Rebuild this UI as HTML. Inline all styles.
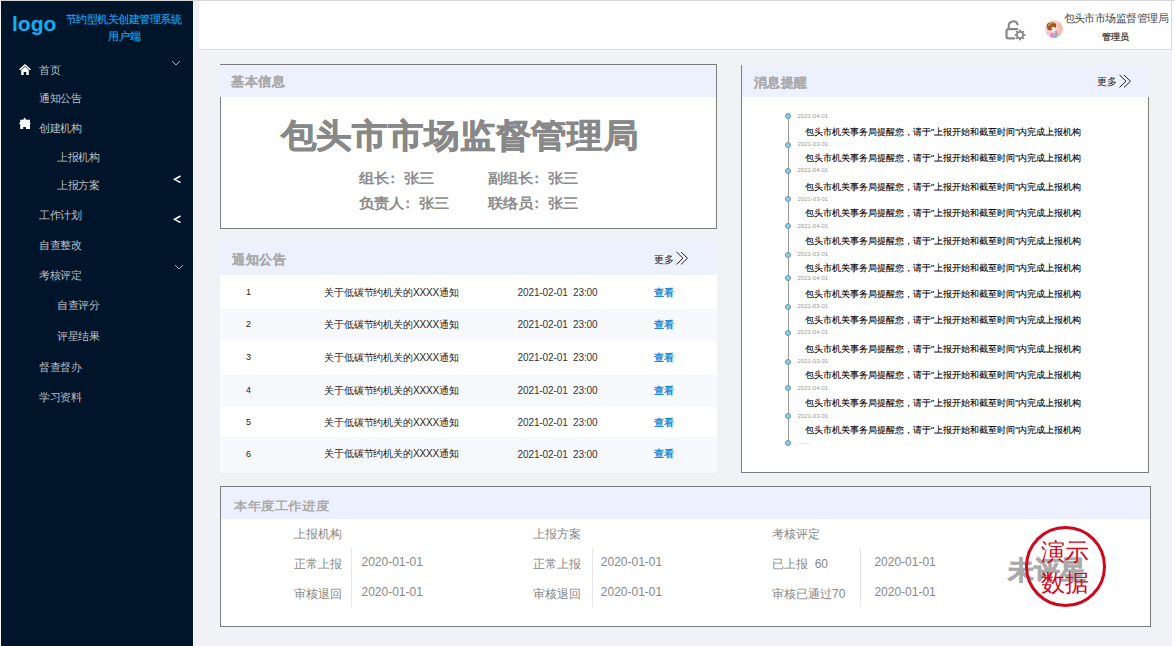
<!DOCTYPE html>
<html><head><meta charset="utf-8"><style>
html,body{margin:0;padding:0;}
body{width:1175px;height:646px;position:relative;overflow:hidden;background:#f0f2f5;font-family:'Liberation Sans',sans-serif;}
.t{position:absolute;white-space:nowrap;}
</style></head><body>
<div style="position:absolute;left:0px;top:0px;width:1175px;height:1px;background:#d8d8d8"></div>
<div style="position:absolute;left:0px;top:1px;width:1px;height:645px;background:#f4f4f4"></div>
<div style="position:absolute;left:1px;top:1px;width:192px;height:645px;background:#001529"></div>
<div style="position:absolute;left:193px;top:1px;width:1px;height:645px;background:#fbfbfc"></div>
<div style="position:absolute;left:199px;top:1px;width:972px;height:48px;background:#fff"></div>
<div style="position:absolute;left:199px;top:49px;width:973px;height:1px;background:#d9d9d9"></div>
<div style="position:absolute;left:1171px;top:1px;width:1px;height:49px;background:#d9d9d9"></div>
<div style="position:absolute;left:1172px;top:1px;width:3px;height:645px;background:#fff"></div>
<div class="t" style="left:12px;top:13px;font-size:21px;line-height:21px;color:#10aef5;font-weight:700;">logo</div>
<div class="t" style="left:66px;top:14px;font-size:11px;line-height:11px;color:#12a6ee;font-weight:400;letter-spacing:-0.55px;-webkit-text-stroke:0.15px #12a6ee">节约型机关创建管理系统</div>
<div class="t" style="left:107.5px;top:30.5px;font-size:11px;line-height:11px;color:#12a6ee;font-weight:400;-webkit-text-stroke:0.15px #12a6ee">用户端</div>
<div class="t" style="left:39px;top:64.8px;font-size:11px;line-height:11px;color:#b9bfc6;font-weight:400;letter-spacing:-0.3px">首页</div>
<div class="t" style="left:39px;top:93.3px;font-size:11px;line-height:11px;color:#b9bfc6;font-weight:400;letter-spacing:-0.3px">通知公告</div>
<div class="t" style="left:39px;top:122.9px;font-size:11px;line-height:11px;color:#b9bfc6;font-weight:400;letter-spacing:-0.3px">创建机构</div>
<div class="t" style="left:57px;top:152.0px;font-size:11px;line-height:11px;color:#b9bfc6;font-weight:400;letter-spacing:-0.3px">上报机构</div>
<div class="t" style="left:57px;top:179.9px;font-size:11px;line-height:11px;color:#b9bfc6;font-weight:400;letter-spacing:-0.3px">上报方案</div>
<div class="t" style="left:39px;top:209.8px;font-size:11px;line-height:11px;color:#b9bfc6;font-weight:400;letter-spacing:-0.3px">工作计划</div>
<div class="t" style="left:39px;top:239.9px;font-size:11px;line-height:11px;color:#b9bfc6;font-weight:400;letter-spacing:-0.3px">自查整改</div>
<div class="t" style="left:39px;top:270.2px;font-size:11px;line-height:11px;color:#b9bfc6;font-weight:400;letter-spacing:-0.3px">考核评定</div>
<div class="t" style="left:57px;top:299.8px;font-size:11px;line-height:11px;color:#b9bfc6;font-weight:400;letter-spacing:-0.3px">自查评分</div>
<div class="t" style="left:57px;top:331.3px;font-size:11px;line-height:11px;color:#b9bfc6;font-weight:400;letter-spacing:-0.3px">评星结果</div>
<div class="t" style="left:39px;top:362.0px;font-size:11px;line-height:11px;color:#b9bfc6;font-weight:400;letter-spacing:-0.3px">督查督办</div>
<div class="t" style="left:39px;top:391.9px;font-size:11px;line-height:11px;color:#b9bfc6;font-weight:400;letter-spacing:-0.3px">学习资料</div>
<svg style="position:absolute;left:18px;top:63px" width="14" height="13" viewBox="0 0 14 13">
<path d="M7 1 L13.2 6.6 L11.5 7 L7 3.1 L2.5 7 L0.8 6.6 Z" fill="#fff"/>
<path d="M3.2 7 L7 3.8 L10.8 7 L10.8 12 L8.3 12 L8.3 9 L5.7 9 L5.7 12 L3.2 12 Z" fill="#fff"/></svg>
<svg style="position:absolute;left:14px;top:112px" width="22" height="22" viewBox="0 0 22 22">
<path d="M6.2 7.7 L9.2 7.7 L10.6 5.5 L12.2 7.7 L16 7.7 L16 10.8 L16.7 11.3 L16 11.9 L16 17 L11.9 17 L11.9 15 L9.2 15 L9.2 17 L6.2 17 L6.2 12.2 L4.9 11.2 L6.2 10.2 Z" fill="#fff"/></svg>
<svg style="position:absolute;left:171px;top:60px" width="10" height="7" viewBox="0 0 10 7"><path d="M1 1 L5 5 L9 1" stroke="#aab" stroke-width="1" fill="none"/></svg>
<svg style="position:absolute;left:174px;top:264px" width="10" height="7" viewBox="0 0 10 7"><path d="M1 1 L5 5 L9 1" stroke="#aab" stroke-width="1" fill="none"/></svg>
<svg style="position:absolute;left:173px;top:175px" width="9" height="9" viewBox="0 0 9 9"><path d="M7.5 1 L1.5 4.3 L7.5 7.6" stroke="#fff" stroke-width="1.5" fill="none"/></svg>
<svg style="position:absolute;left:173px;top:214.5px" width="9" height="9" viewBox="0 0 9 9"><path d="M7.5 1 L1.5 4.3 L7.5 7.6" stroke="#fff" stroke-width="1.5" fill="none"/></svg>
<svg style="position:absolute;left:1000px;top:15px" width="30" height="30" viewBox="0 0 30 30">
<path d="M8.7 14 L8.7 11 A4.6 4.6 0 0 1 17.6 9.3" stroke="#888" stroke-width="2.1" fill="none" stroke-linecap="round"/>
<path d="M17.2 14.2 L8.6 14.2 Q6.5 14.2 6.5 16.3 L6.5 21.2 Q6.5 23.3 8.6 23.3 L14.4 23.3" stroke="#888" stroke-width="2.2" fill="none" stroke-linecap="round"/>
<circle cx="20" cy="20" r="3.1" stroke="#888" stroke-width="1.8" fill="none"/>
<g><circle cx="24.50" cy="20.00" r="1.05" fill="#888"/><circle cx="23.18" cy="23.18" r="1.05" fill="#888"/><circle cx="20.00" cy="24.50" r="1.05" fill="#888"/><circle cx="16.82" cy="23.18" r="1.05" fill="#888"/><circle cx="15.50" cy="20.00" r="1.05" fill="#888"/><circle cx="16.82" cy="16.82" r="1.05" fill="#888"/><circle cx="20.00" cy="15.50" r="1.05" fill="#888"/><circle cx="23.18" cy="16.82" r="1.05" fill="#888"/>
</g></svg>
<div style="position:absolute;left:1045px;top:20px;width:18px;height:18px;border-radius:50%;overflow:hidden"><svg style="display:block" width="18" height="18" viewBox="0 0 18 18">
<g>
<rect width="18" height="18" fill="#f6d2d0"/>
<path d="M12 3 L18 1 L18 12 L14 14 Z" fill="#f3b9b2" opacity="0.8"/>
<path d="M2 4 Q5 1.5 9 2.5 Q12 3.5 11 7 Q10 10 7 10.5 L3 10 Q1 7 2 4 Z" fill="#9a5528"/>
<circle cx="4" cy="5" r="0.9" fill="#e8b830"/><circle cx="6" cy="3.5" r="0.9" fill="#e8b830"/><circle cx="8.5" cy="2.8" r="0.8" fill="#e8b830"/>
<path d="M6.5 7 Q9 6 10.5 8 L10.5 11.5 Q8.5 12.5 7 11.5 Z" fill="#fae6dc"/>
<path d="M9.5 11.5 L12 10.5 L13 13.5 L11 14 Z" fill="#e08a85"/>
<path d="M5 13.5 Q7 12.5 9 13 L9 18 L5 18 Z" fill="#ec86cf"/>
<path d="M8.5 13.5 Q11 13 13 14 L12.5 18 L8.5 18 Z" fill="#8fb0d8"/>
<circle cx="14.5" cy="14.5" r="1.1" fill="#a8cc60"/>
<circle cx="3" cy="13" r="1" fill="#b8b8e0"/>
</g></svg></div>
<div class="t" style="left:1063.5px;top:12.8px;font-size:11px;line-height:11px;color:#4a4a4a;font-weight:400;letter-spacing:-0.55px">包头市市场监督管理局</div>
<div class="t" style="left:1102px;top:32.5px;font-size:9px;line-height:9px;color:#333;font-weight:400;-webkit-text-stroke:0.25px #333;letter-spacing:0.2px">管理员</div>
<div style="position:absolute;left:220px;top:64px;width:497px;height:165px;box-sizing:border-box;border:1px solid #7d7d7d;background:#fff"></div>
<div style="position:absolute;left:221px;top:65px;width:495px;height:32px;background:#ecf1fd"></div>
<div style="position:absolute;left:220px;top:65px;width:1px;height:32px;background:#ecf1fd"></div>
<div class="t" style="left:231px;top:75px;font-size:13px;line-height:13px;color:#aaa;font-weight:700;letter-spacing:0.5px;-webkit-text-stroke:0.15px #aaa">基本信息</div>
<div class="t" style="left:280.5px;top:118.5px;font-size:36px;line-height:36px;color:#888;font-weight:700;letter-spacing:-0.15px;-webkit-text-stroke:0.75px #888;transform:scaleY(0.93);transform-origin:0 0">包头市市场监督管理局</div>
<div class="t" style="left:359px;top:171.0px;font-size:15px;line-height:15px;color:#8c8c8c;font-weight:700;transform:scaleY(0.91);transform-origin:0 0">组长<span style="position:relative;left:-4px">：</span>张三</div>
<div class="t" style="left:488px;top:171.0px;font-size:15px;line-height:15px;color:#8c8c8c;font-weight:700;transform:scaleY(0.91);transform-origin:0 0">副组长<span style="position:relative;left:-4px">：</span>张三</div>
<div class="t" style="left:359px;top:195.8px;font-size:15px;line-height:15px;color:#8c8c8c;font-weight:700;transform:scaleY(0.91);transform-origin:0 0">负责人<span style="position:relative;left:-4px">：</span>张三</div>
<div class="t" style="left:488px;top:195.8px;font-size:15px;line-height:15px;color:#8c8c8c;font-weight:700;transform:scaleY(0.91);transform-origin:0 0">联络员<span style="position:relative;left:-4px">：</span>张三</div>
<div style="position:absolute;left:220px;top:242px;width:497px;height:33px;background:#ecf1fd"></div>
<div class="t" style="left:232px;top:252.5px;font-size:13px;line-height:13px;color:#aaa;font-weight:700;letter-spacing:0.5px;-webkit-text-stroke:0.15px #aaa">通知公告</div>
<div class="t" style="left:653.5px;top:254.5px;font-size:10px;line-height:10px;color:#222;font-weight:400;letter-spacing:0.3px">更多</div>
<svg style="position:absolute;left:675px;top:250.5px" width="15" height="15" viewBox="0 0 15 15"><path d="M1.5 1 L8 7.2 L1.5 13.4" stroke="#222" stroke-width="1" fill="none"/><path d="M6 1 L12.5 7.2 L6 13.4" stroke="#222" stroke-width="1" fill="none"/></svg>
<div style="position:absolute;left:220px;top:275px;width:497px;height:34px;background:#fff"></div>
<div class="t" style="left:246px;top:287.8px;font-size:9px;line-height:9px;color:#222;font-weight:400;">1</div>
<div class="t" style="left:324px;top:287.5px;font-size:10px;line-height:10px;color:#222;font-weight:400;letter-spacing:-0.12px">关于低碳节约机关的XXXX通知</div>
<div class="t" style="left:517.5px;top:287.9px;font-size:10px;line-height:10px;color:#333;font-weight:400;letter-spacing:-0.1px">2021-02-01&nbsp;&nbsp;23:00</div>
<div class="t" style="left:654px;top:287.5px;font-size:10px;line-height:10px;color:#1a8cd8;font-weight:700;">查看</div>
<div style="position:absolute;left:220px;top:309px;width:497px;height:31px;background:#f8f9fc"></div>
<div class="t" style="left:246px;top:319.90000000000003px;font-size:9px;line-height:9px;color:#222;font-weight:400;">2</div>
<div class="t" style="left:324px;top:319.6px;font-size:10px;line-height:10px;color:#222;font-weight:400;letter-spacing:-0.12px">关于低碳节约机关的XXXX通知</div>
<div class="t" style="left:517.5px;top:320.0px;font-size:10px;line-height:10px;color:#333;font-weight:400;letter-spacing:-0.1px">2021-02-01&nbsp;&nbsp;23:00</div>
<div class="t" style="left:654px;top:319.6px;font-size:10px;line-height:10px;color:#1a8cd8;font-weight:700;">查看</div>
<div style="position:absolute;left:220px;top:340px;width:497px;height:35px;background:#fff"></div>
<div class="t" style="left:246px;top:352.90000000000003px;font-size:9px;line-height:9px;color:#222;font-weight:400;">3</div>
<div class="t" style="left:324px;top:352.6px;font-size:10px;line-height:10px;color:#222;font-weight:400;letter-spacing:-0.12px">关于低碳节约机关的XXXX通知</div>
<div class="t" style="left:517.5px;top:353.0px;font-size:10px;line-height:10px;color:#333;font-weight:400;letter-spacing:-0.1px">2021-02-01&nbsp;&nbsp;23:00</div>
<div class="t" style="left:654px;top:352.6px;font-size:10px;line-height:10px;color:#1a8cd8;font-weight:700;">查看</div>
<div style="position:absolute;left:220px;top:375px;width:497px;height:32px;background:#f8f9fc"></div>
<div class="t" style="left:246px;top:385.8px;font-size:9px;line-height:9px;color:#222;font-weight:400;">4</div>
<div class="t" style="left:324px;top:385.5px;font-size:10px;line-height:10px;color:#222;font-weight:400;letter-spacing:-0.12px">关于低碳节约机关的XXXX通知</div>
<div class="t" style="left:517.5px;top:385.9px;font-size:10px;line-height:10px;color:#333;font-weight:400;letter-spacing:-0.1px">2021-02-01&nbsp;&nbsp;23:00</div>
<div class="t" style="left:654px;top:385.5px;font-size:10px;line-height:10px;color:#1a8cd8;font-weight:700;">查看</div>
<div style="position:absolute;left:220px;top:407px;width:497px;height:30px;background:#fff"></div>
<div class="t" style="left:246px;top:417.90000000000003px;font-size:9px;line-height:9px;color:#222;font-weight:400;">5</div>
<div class="t" style="left:324px;top:417.6px;font-size:10px;line-height:10px;color:#222;font-weight:400;letter-spacing:-0.12px">关于低碳节约机关的XXXX通知</div>
<div class="t" style="left:517.5px;top:418.0px;font-size:10px;line-height:10px;color:#333;font-weight:400;letter-spacing:-0.1px">2021-02-01&nbsp;&nbsp;23:00</div>
<div class="t" style="left:654px;top:417.6px;font-size:10px;line-height:10px;color:#1a8cd8;font-weight:700;">查看</div>
<div style="position:absolute;left:220px;top:437px;width:497px;height:36px;background:#f8f9fc"></div>
<div class="t" style="left:246px;top:449.7px;font-size:9px;line-height:9px;color:#222;font-weight:400;">6</div>
<div class="t" style="left:324px;top:449.4px;font-size:10px;line-height:10px;color:#222;font-weight:400;letter-spacing:-0.12px">关于低碳节约机关的XXXX通知</div>
<div class="t" style="left:517.5px;top:449.79999999999995px;font-size:10px;line-height:10px;color:#333;font-weight:400;letter-spacing:-0.1px">2021-02-01&nbsp;&nbsp;23:00</div>
<div class="t" style="left:654px;top:449.4px;font-size:10px;line-height:10px;color:#1a8cd8;font-weight:700;">查看</div>
<div style="position:absolute;left:741px;top:65px;width:408px;height:408px;box-sizing:border-box;border:1px solid #7d7d7d;border-top:none;background:#fff"></div>
<div style="position:absolute;left:741px;top:65px;width:408px;height:32px;background:#ecf1fd"></div>
<div style="position:absolute;left:741px;top:65px;width:1px;height:32px;background:#7d7d7d"></div>
<div class="t" style="left:753.5px;top:75.5px;font-size:13px;line-height:13px;color:#aaa;font-weight:700;letter-spacing:0.5px;-webkit-text-stroke:0.15px #aaa">消息提醒</div>
<div class="t" style="left:1096.5px;top:77px;font-size:10px;line-height:10px;color:#222;font-weight:400;letter-spacing:0.3px">更多</div>
<svg style="position:absolute;left:1118px;top:74px" width="15" height="15" viewBox="0 0 15 15"><path d="M1.5 1 L8 7.2 L1.5 13.4" stroke="#222" stroke-width="1" fill="none"/><path d="M6 1 L12.5 7.2 L6 13.4" stroke="#222" stroke-width="1" fill="none"/></svg>
<div style="position:absolute;left:787.5px;top:115.8px;width:1px;height:326.59999999999997px;background:#999"></div>
<div style="position:absolute;left:785px;top:113.3px;width:4px;height:4px;border-radius:50%;background:#80d0f6;border:1px solid #7890a0"></div>
<div class="t" style="left:797.5px;top:112.8px;font-size:6px;line-height:6px;color:#999;font-weight:400;">2021-04-01</div>
<div style="position:absolute;left:785px;top:141.9px;width:4px;height:4px;border-radius:50%;background:#80d0f6;border:1px solid #7890a0"></div>
<div class="t" style="left:797.5px;top:141.4px;font-size:6px;line-height:6px;color:#999;font-weight:400;">2021-03-01</div>
<div style="position:absolute;left:785px;top:167.9px;width:4px;height:4px;border-radius:50%;background:#80d0f6;border:1px solid #7890a0"></div>
<div class="t" style="left:797.5px;top:167.4px;font-size:6px;line-height:6px;color:#999;font-weight:400;">2021-04-01</div>
<div style="position:absolute;left:785px;top:196.3px;width:4px;height:4px;border-radius:50%;background:#80d0f6;border:1px solid #7890a0"></div>
<div class="t" style="left:797.5px;top:195.8px;font-size:6px;line-height:6px;color:#999;font-weight:400;">2021-03-01</div>
<div style="position:absolute;left:785px;top:223.1px;width:4px;height:4px;border-radius:50%;background:#80d0f6;border:1px solid #7890a0"></div>
<div class="t" style="left:797.5px;top:222.6px;font-size:6px;line-height:6px;color:#999;font-weight:400;">2021-04-01</div>
<div style="position:absolute;left:785px;top:251.5px;width:4px;height:4px;border-radius:50%;background:#80d0f6;border:1px solid #7890a0"></div>
<div class="t" style="left:797.5px;top:251px;font-size:6px;line-height:6px;color:#999;font-weight:400;">2021-03-01</div>
<div style="position:absolute;left:785px;top:275.1px;width:4px;height:4px;border-radius:50%;background:#80d0f6;border:1px solid #7890a0"></div>
<div class="t" style="left:797.5px;top:274.6px;font-size:6px;line-height:6px;color:#999;font-weight:400;">2021-04-01</div>
<div style="position:absolute;left:785px;top:303.9px;width:4px;height:4px;border-radius:50%;background:#80d0f6;border:1px solid #7890a0"></div>
<div class="t" style="left:797.5px;top:303.4px;font-size:6px;line-height:6px;color:#999;font-weight:400;">2021-03-01</div>
<div style="position:absolute;left:785px;top:329.9px;width:4px;height:4px;border-radius:50%;background:#80d0f6;border:1px solid #7890a0"></div>
<div class="t" style="left:797.5px;top:329.4px;font-size:6px;line-height:6px;color:#999;font-weight:400;">2021-04-01</div>
<div style="position:absolute;left:785px;top:358.5px;width:4px;height:4px;border-radius:50%;background:#80d0f6;border:1px solid #7890a0"></div>
<div class="t" style="left:797.5px;top:358px;font-size:6px;line-height:6px;color:#999;font-weight:400;">2021-03-01</div>
<div style="position:absolute;left:785px;top:385.1px;width:4px;height:4px;border-radius:50%;background:#80d0f6;border:1px solid #7890a0"></div>
<div class="t" style="left:797.5px;top:384.6px;font-size:6px;line-height:6px;color:#999;font-weight:400;">2021-04-01</div>
<div style="position:absolute;left:785px;top:413.3px;width:4px;height:4px;border-radius:50%;background:#80d0f6;border:1px solid #7890a0"></div>
<div class="t" style="left:797.5px;top:412.8px;font-size:6px;line-height:6px;color:#999;font-weight:400;">2021-03-01</div>
<div style="position:absolute;left:785px;top:439.9px;width:4px;height:4px;border-radius:50%;background:#80d0f6;border:1px solid #7890a0"></div>
<div class="t" style="left:797.5px;top:437.9px;font-size:7px;line-height:7px;color:#aaa;font-weight:400;letter-spacing:0.2px">......</div>
<div class="t" style="left:805px;top:127.9px;font-size:9px;line-height:9px;color:#000;font-weight:400;-webkit-text-stroke:0.1px #000">包头市机关事务局提醒您，请于"上报开始和截至时间"内完成上报机构</div>
<div class="t" style="left:805px;top:153.9px;font-size:9px;line-height:9px;color:#000;font-weight:400;-webkit-text-stroke:0.1px #000">包头市机关事务局提醒您，请于"上报开始和截至时间"内完成上报机构</div>
<div class="t" style="left:805px;top:182.7px;font-size:9px;line-height:9px;color:#000;font-weight:400;-webkit-text-stroke:0.1px #000">包头市机关事务局提醒您，请于"上报开始和截至时间"内完成上报机构</div>
<div class="t" style="left:805px;top:208.7px;font-size:9px;line-height:9px;color:#000;font-weight:400;-webkit-text-stroke:0.1px #000">包头市机关事务局提醒您，请于"上报开始和截至时间"内完成上报机构</div>
<div class="t" style="left:805px;top:237px;font-size:9px;line-height:9px;color:#000;font-weight:400;-webkit-text-stroke:0.1px #000">包头市机关事务局提醒您，请于"上报开始和截至时间"内完成上报机构</div>
<div class="t" style="left:805px;top:263.9px;font-size:9px;line-height:9px;color:#000;font-weight:400;-webkit-text-stroke:0.1px #000">包头市机关事务局提醒您，请于"上报开始和截至时间"内完成上报机构</div>
<div class="t" style="left:805px;top:289.8px;font-size:9px;line-height:9px;color:#000;font-weight:400;-webkit-text-stroke:0.1px #000">包头市机关事务局提醒您，请于"上报开始和截至时间"内完成上报机构</div>
<div class="t" style="left:805px;top:316.3px;font-size:9px;line-height:9px;color:#000;font-weight:400;-webkit-text-stroke:0.1px #000">包头市机关事务局提醒您，请于"上报开始和截至时间"内完成上报机构</div>
<div class="t" style="left:805px;top:344.9px;font-size:9px;line-height:9px;color:#000;font-weight:400;-webkit-text-stroke:0.1px #000">包头市机关事务局提醒您，请于"上报开始和截至时间"内完成上报机构</div>
<div class="t" style="left:805px;top:370.9px;font-size:9px;line-height:9px;color:#000;font-weight:400;-webkit-text-stroke:0.1px #000">包头市机关事务局提醒您，请于"上报开始和截至时间"内完成上报机构</div>
<div class="t" style="left:805px;top:398.8px;font-size:9px;line-height:9px;color:#000;font-weight:400;-webkit-text-stroke:0.1px #000">包头市机关事务局提醒您，请于"上报开始和截至时间"内完成上报机构</div>
<div class="t" style="left:805px;top:425.7px;font-size:9px;line-height:9px;color:#000;font-weight:400;-webkit-text-stroke:0.1px #000">包头市机关事务局提醒您，请于"上报开始和截至时间"内完成上报机构</div>
<div style="position:absolute;left:220px;top:486px;width:931px;height:141px;box-sizing:border-box;border:1px solid #7d7d7d;background:#fff"></div>
<div style="position:absolute;left:221px;top:487px;width:929px;height:32px;background:#ecf1fd"></div>
<div class="t" style="left:234px;top:500.3px;font-size:13px;line-height:13px;color:#aaa;font-weight:700;letter-spacing:0.6px;transform:scaleY(0.9);transform-origin:0 0">本年度工作进度</div>
<div class="t" style="left:294px;top:528px;font-size:12px;line-height:12px;color:#888;font-weight:400;">上报机构</div>
<div class="t" style="left:294px;top:558px;font-size:12px;line-height:12px;color:#888;font-weight:400;">正常上报</div>
<div class="t" style="left:294px;top:588px;font-size:12px;line-height:12px;color:#888;font-weight:400;">审核退回</div>
<div style="position:absolute;left:351px;top:548px;width:1px;height:59px;background:#e6e6e6"></div>
<div class="t" style="left:361.5px;top:555.5px;font-size:12px;line-height:12px;color:#888;font-weight:400;">2020-01-01</div>
<div class="t" style="left:361.5px;top:585.5px;font-size:12px;line-height:12px;color:#888;font-weight:400;">2020-01-01</div>
<div class="t" style="left:533px;top:528px;font-size:12px;line-height:12px;color:#888;font-weight:400;">上报方案</div>
<div class="t" style="left:533px;top:558px;font-size:12px;line-height:12px;color:#888;font-weight:400;">正常上报</div>
<div class="t" style="left:533px;top:588px;font-size:12px;line-height:12px;color:#888;font-weight:400;">审核退回</div>
<div style="position:absolute;left:592px;top:548px;width:1px;height:59px;background:#e6e6e6"></div>
<div class="t" style="left:600.8px;top:555.5px;font-size:12px;line-height:12px;color:#888;font-weight:400;">2020-01-01</div>
<div class="t" style="left:600.8px;top:585.5px;font-size:12px;line-height:12px;color:#888;font-weight:400;">2020-01-01</div>
<div class="t" style="left:772px;top:528px;font-size:12px;line-height:12px;color:#888;font-weight:400;">考核评定</div>
<div class="t" style="left:772px;top:558px;font-size:12px;line-height:12px;color:#888;font-weight:400;">已上报&nbsp;&nbsp;60</div>
<div class="t" style="left:772px;top:588px;font-size:12px;line-height:12px;color:#888;font-weight:400;">审核已通过70</div>
<div style="position:absolute;left:860px;top:548px;width:1px;height:59px;background:#e6e6e6"></div>
<div class="t" style="left:874.4px;top:555.5px;font-size:12px;line-height:12px;color:#888;font-weight:400;">2020-01-01</div>
<div class="t" style="left:874.4px;top:585.5px;font-size:12px;line-height:12px;color:#888;font-weight:400;">2020-01-01</div>
<div class="t" style="left:1008px;top:556.5px;font-size:26px;line-height:26px;color:#aaa;font-weight:700;-webkit-text-stroke:0.6px #aaa">未评星</div>
<div style="position:absolute;left:1025px;top:526px;width:75px;height:75px;border-radius:50%;border:3px solid #d0081e"></div>
<div class="t" style="left:1041px;top:540px;font-size:24px;line-height:24px;color:#d0081e;font-weight:400;">演示</div>
<div class="t" style="left:1041px;top:570.5px;font-size:24px;line-height:24px;color:#d0081e;font-weight:400;">数据</div>
</body></html>
